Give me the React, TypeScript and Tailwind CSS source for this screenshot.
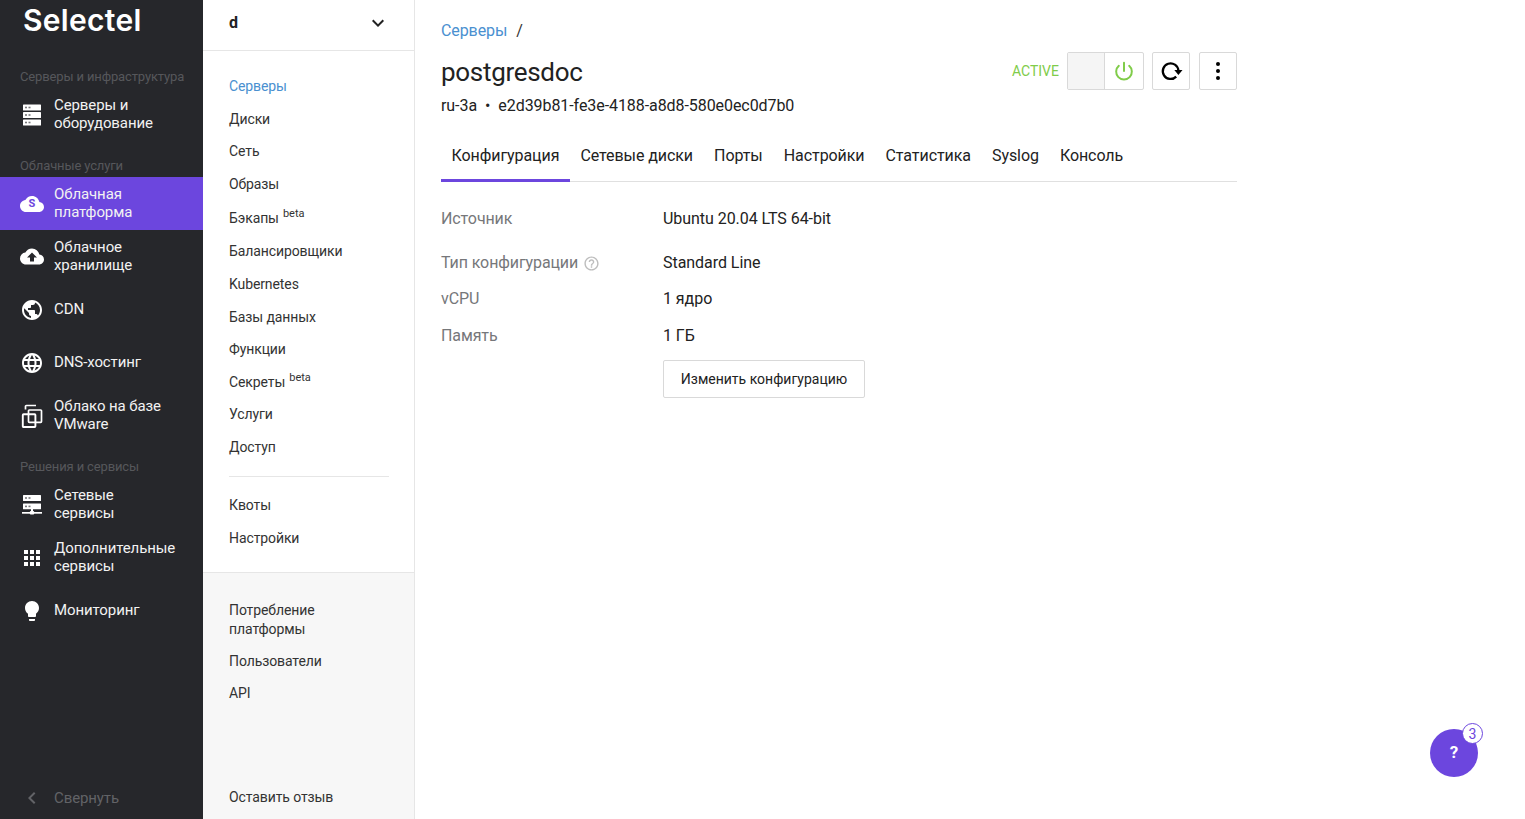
import React from "react";
import { MdPublic, MdLanguage, MdCloudUpload, MdApps, MdLightbulb, MdHelpOutline, MdKeyboardArrowDown, MdChevronLeft } from "react-icons/md";

const ServersIcon = () => (
  <svg width="24" height="24" viewBox="0 0 24 24" fill="white">
    {[1.5, 9, 16.5].map((y) => (
      <g key={y}>
        <rect x="3" y={y} width="18" height="6" rx="0.6" />
        <rect x="5" y={y + 2.2} width="2" height="1.6" fill="#77787b" />
        <rect x="8.5" y={y + 2.2} width="2" height="1.6" fill="#77787b" />
      </g>
    ))}
  </svg>
);

const CloudS = () => (
  <div className="relative w-6 h-6 flex items-center justify-center text-white">
    <svg width="26" height="24" viewBox="0 0 24 24" fill="white">
      <path d="M19.35 10.04C18.67 6.59 15.64 4 12 4 9.11 4 6.6 5.64 5.35 8.04 2.34 8.36 0 10.91 0 14c0 3.31 2.69 6 6 6h13c2.76 0 5-2.24 5-5 0-2.64-2.05-4.78-4.65-4.96z" />
    </svg>
    <span className="absolute inset-0 flex items-center justify-center text-[11px] font-bold text-[#6c46de] pt-[1px]">S</span>
  </div>
);

const VmwareIcon = () => (
  <svg width="24" height="24" viewBox="0 0 24 24" fill="none" stroke="white" strokeWidth="1.7">
    <path d="M5.5 5.5V2.4a.9.9 0 0 1 .9-.9H16" />
    <rect x="8.5" y="6" width="13" height="12.3" rx="0.8" />
    <rect x="2.8" y="10.2" width="12.6" height="12.8" rx="0.8" strokeWidth="1.9" />
  </svg>
);

const NetIcon = () => (
  <svg width="24" height="24" viewBox="0 0 24 24" fill="white">
    <rect x="3" y="2" width="18" height="6" rx="0.5" />
    <rect x="3" y="10.5" width="18" height="5.8" rx="0.5" />
    <rect x="5" y="4.2" width="2" height="1.6" fill="#77787b" />
    <rect x="8.5" y="4.2" width="2" height="1.6" fill="#77787b" />
    <rect x="5" y="12.6" width="2" height="1.6" fill="#77787b" />
    <rect x="8.5" y="12.6" width="2" height="1.6" fill="#77787b" />
    <rect x="11" y="16" width="2" height="3" />
    <rect x="2" y="19" width="20" height="1.7" />
    <rect x="9.8" y="18" width="4.4" height="3.6" rx="1" />
  </svg>
);

const RefreshIcon = () => (
  <svg width="24" height="24" viewBox="0 0 24 24" fill="none" stroke="black" strokeWidth="2.3">
    <path d="M17.2 17.6A7.8 7.8 0 1 1 19.4 11.5" />
    <path d="M15.3 11h8.2l-4.1 5z" fill="black" stroke="none" />
  </svg>
);

function NavItem({ icon, lines, active }: { icon: React.ReactNode; lines: string[]; active?: boolean }) {
  return (
    <div className={`h-[53px] flex items-center pl-5 ${active ? "bg-[#6c46de]" : ""}`}>
      <div className="w-6 h-6 flex items-center justify-center shrink-0 text-white">{icon}</div>
      <div className="ml-[10px] pb-[1px] text-[15px] leading-[18px] tracking-[-0.1px] text-[#f2f2f2]">
        {lines.map((l) => (
          <div key={l}>{l}</div>
        ))}
      </div>
    </div>
  );
}

const SectionLabel = ({ children }: { children: React.ReactNode }) => (
  <div className="h-9 pt-[15px] pl-5 text-[13px] leading-5 tracking-[-0.14px] text-[#56575b]">{children}</div>
);

const SubItem = ({ children, beta, active, tall }: { children: React.ReactNode; beta?: boolean; active?: boolean; tall?: boolean }) => (
  <div className={`${tall ? "h-[34.7px]" : "h-[32.6px]"} flex items-center text-sm tracking-[-0.1px] ${active ? "text-[#4a90d0]" : "text-[#333]"}`}>
    {children}
    {beta && <sup className="ml-1 text-[11px] translate-y-[2px] tracking-normal">beta</sup>}
  </div>
);

const InfoRow = ({ label, value, help, h }: { label: string; value: string; help?: boolean; h: string }) => (
  <div className={`flex items-center ${h}`}>
    <div className="w-[222px] flex items-center text-[#76777a] tracking-[-0.1px]">
      {label}
      {help && <MdHelpOutline className="ml-[5px] text-[#bdbdbd]" size={17} />}
    </div>
    <div className="text-[#222] tracking-[-0.05px]">{value}</div>
  </div>
);

export default function App() {
  const tabs = ["Конфигурация", "Сетевые диски", "Порты", "Настройки", "Статистика", "Syslog", "Консоль"];
  return (
    <div className="relative flex h-[819px] w-[1525px] overflow-hidden bg-white font-['Roboto',sans-serif]">
      <aside className="w-[203px] shrink-0 bg-[#26272b] flex flex-col">
        <div className="h-[52px] pl-[23px] pt-[2px] font-['Inter',sans-serif] text-[30px] leading-[36px] font-semibold tracking-[0.3px] text-white">Selectel</div>
        <SectionLabel>Серверы и инфраструктура</SectionLabel>
        <NavItem icon={<ServersIcon />} lines={["Серверы и", "оборудование"]} />
        <SectionLabel>Облачные услуги</SectionLabel>
        <NavItem active icon={<CloudS />} lines={["Облачная", "платформа"]} />
        <NavItem icon={<MdCloudUpload size={27} />} lines={["Облачное", "хранилище"]} />
        <NavItem icon={<MdPublic size={24} />} lines={["CDN"]} />
        <NavItem icon={<MdLanguage size={24} />} lines={["DNS-хостинг"]} />
        <NavItem icon={<VmwareIcon />} lines={["Облако на базе", "VMware"]} />
        <SectionLabel>Решения и сервисы</SectionLabel>
        <NavItem icon={<NetIcon />} lines={["Сетевые", "сервисы"]} />
        <NavItem icon={<MdApps size={24} />} lines={["Дополнительные", "сервисы"]} />
        <NavItem icon={<MdLightbulb size={24} />} lines={["Мониторинг"]} />
        <div className="mt-auto h-[42px] flex items-center pl-5 text-[15px] text-[#626367] tracking-[-0.1px]">
          <MdChevronLeft size={24} className="shrink-0" />
          <span className="ml-[10px]">Свернуть</span>
        </div>
      </aside>

      <div className="w-[212px] shrink-0 border-r border-[#e6e6e6] flex flex-col">
        <div className="h-[51px] shrink-0 border-b border-[#e6e6e6] flex items-center justify-between pl-[26px] pr-6 pb-[4px] font-bold text-[#222]">
          <span>d</span>
          <MdKeyboardArrowDown size={24} className="text-[#222]" />
        </div>
        <div className="h-[522px] shrink-0 border-b border-[#e6e6e6] pl-[26px] pr-[25px] pt-[19px]">
          <SubItem active>Серверы</SubItem>
          <SubItem>Диски</SubItem>
          <SubItem>Сеть</SubItem>
          <SubItem>Образы</SubItem>
          <SubItem beta tall>Бэкапы</SubItem>
          <SubItem>Балансировщики</SubItem>
          <SubItem>Kubernetes</SubItem>
          <SubItem>Базы данных</SubItem>
          <SubItem>Функции</SubItem>
          <SubItem beta>Секреты</SubItem>
          <SubItem>Услуги</SubItem>
          <SubItem>Доступ</SubItem>
          <div className="border-t border-[#e6e6e6] mt-[12.6px] mb-[12px]" />
          <SubItem>Квоты</SubItem>
          <SubItem>Настройки</SubItem>
        </div>
        <div className="flex-1 bg-[#f7f7f7] pl-[26px] pr-4 pt-[28px] flex flex-col text-sm tracking-[-0.1px] text-[#333]">
          <div className="leading-[19px]">Потребление<br />платформы</div>
          <div className="mt-[13px] leading-[19px]">Пользователи</div>
          <div className="mt-[13px] leading-[19px]">API</div>
          <div className="mt-auto mb-[12px] leading-[19px]">Оставить отзыв</div>
        </div>
      </div>

      <main className="w-[796px] ml-[26px] shrink-0 text-base">
        <div className="pt-[21px] h-[43px] leading-5 tracking-[-0.1px]">
          <span className="text-[#4a90d0]">Серверы</span>
          <span className="ml-[9px] text-[#333]">/</span>
        </div>
        <div className="flex justify-between items-start">
          <div>
            <h1 className="text-[26px] leading-[30px] mt-[14px] text-[#222] tracking-[-0.3px]">postgresdoc</h1>
            <div className="mt-[9px] leading-5 text-[#222] tracking-[-0.07px]">
              ru-3a<span className="mx-2">•</span>e2d39b81-fe3e-4188-a8d8-580e0ec0d7b0
            </div>
          </div>
          <div className="flex items-center mt-[9px]">
            <span className="text-sm text-[#80cc4a] mr-2">ACTIVE</span>
            <div className="flex h-[38px] w-[77px] border border-[#d9d9d9] rounded-[2px] overflow-hidden">
              <div className="w-[37px] bg-[#f5f5f5] border-r border-[#d9d9d9]" />
              <div className="flex-1 flex items-center justify-center">
                <svg width="20" height="20" viewBox="0 0 24 24" fill="none" stroke="#80cc4a" strokeWidth="2.4" strokeLinecap="round">
                  <path d="M12 2v10" />
                  <path d="M18.2 5.8a9.4 9.4 0 1 1-12.4 0" />
                </svg>
              </div>
            </div>
            <div className="ml-2 flex h-[38px] w-[38px] items-center justify-center border border-[#d9d9d9] rounded-[2px]">
              <RefreshIcon />
            </div>
            <div className="ml-[9px] flex h-[38px] w-[38px] flex-col items-center justify-center gap-[3px] border border-[#d9d9d9] rounded-[2px]">
              <span className="w-1 h-1 rounded-full bg-black" />
              <span className="w-1 h-1 rounded-full bg-black" />
              <span className="w-1 h-1 rounded-full bg-black" />
            </div>
          </div>
        </div>

        <div className="mt-[19px] flex h-[47px] border-b border-[#e0e0e0] text-[#222]">
          {tabs.map((t, i) => (
            <div key={t} className={`h-[47px] px-[10.5px] flex items-center pb-[6px] tracking-[-0.07px] ${i === 0 ? "border-b-[3px] border-[#6c46de] pt-[3px]" : ""}`}>
              {t}
            </div>
          ))}
        </div>

        <div className="mt-[18px]">
          <InfoRow h="h-[37px]" label="Источник" value="Ubuntu 20.04 LTS 64-bit" />
          <div className="h-[8px]" />
          <InfoRow h="h-[36px]" label="Тип конфигурации" help value="Standard Line" />
          <InfoRow h="h-[36px]" label="vCPU" value="1 ядро" />
          <InfoRow h="h-[37px]" label="Память" value="1 ГБ" />
          <div className="pl-[222px] mt-[6px]">
            <button className="h-[38px] w-[202px] border border-[#d9d9d9] rounded-[2px] text-sm tracking-normal text-[#222]">Изменить конфигурацию</button>
          </div>
        </div>
      </main>

      <div className="absolute left-[1430px] top-[729px] w-12 h-12 rounded-full bg-[#6c46de] flex items-center justify-center text-white font-bold text-[17px]">
        ?
        <span className="absolute -top-[6px] -right-[5px] w-[21px] h-[21px] rounded-full bg-white border border-[#6c46de] text-[#6c46de] text-sm font-normal flex items-center justify-center">3</span>
      </div>
    </div>
  );
}
